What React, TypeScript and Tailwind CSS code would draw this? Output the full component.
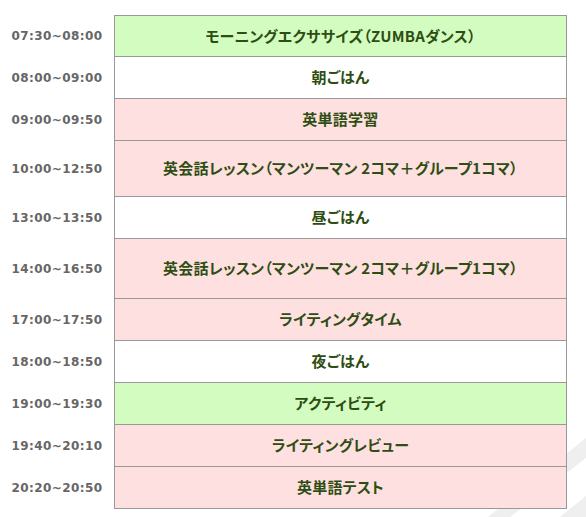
import React from "react";

type Row = {
  time: string;
  title: string;
  bg: "green" | "white" | "pink";
  h: string;
};

const rows: Row[] = [
  { time: "07:30~08:00", title: "モーニングエクササイズ（ZUMBAダンス）", bg: "green", h: "h-[42px]" },
  { time: "08:00~09:00", title: "朝ごはん", bg: "white", h: "h-[42px]" },
  { time: "09:00~09:50", title: "英単語学習", bg: "pink", h: "h-[42px]" },
  { time: "10:00~12:50", title: "英会話レッスン（マンツーマン 2コマ＋グループ1コマ）", bg: "pink", h: "h-[56px]" },
  { time: "13:00~13:50", title: "昼ごはん", bg: "white", h: "h-[42px]" },
  { time: "14:00~16:50", title: "英会話レッスン（マンツーマン 2コマ＋グループ1コマ）", bg: "pink", h: "h-[60px]" },
  { time: "17:00~17:50", title: "ライティングタイム", bg: "pink", h: "h-[42px]" },
  { time: "18:00~18:50", title: "夜ごはん", bg: "white", h: "h-[42px]" },
  { time: "19:00~19:30", title: "アクティビティ", bg: "green", h: "h-[42px]" },
  { time: "19:40~20:10", title: "ライティングレビュー", bg: "pink", h: "h-[42px]" },
  { time: "20:20~20:50", title: "英単語テスト", bg: "pink", h: "h-[42px]" },
];

const bgClass = {
  green: "bg-[#d3fdc0]",
  white: "bg-white",
  pink: "bg-[#ffe0e0]",
};

export default function App() {
  return (
    <div className="relative w-[586px] h-[517px] overflow-hidden bg-white">
      {/* faint diagonal stripes in the corner */}
      <svg className="absolute left-0 top-0" width="586" height="517" viewBox="0 0 586 517">
        <polygon points="586,438 586,458 500,525 478,525" fill="#efefef" />
        <polygon points="586,496 586,540 555,540 555,521" fill="#efefef" />
      </svg>

      <div className="relative pt-[15px] flex flex-col">
        {rows.map((r, i) => (
          <div key={i} className={`flex ${r.h} ${i === 0 ? "box-content" : ""}`}>
            <div className="w-[114px] flex items-center justify-center pb-px font-['DejaVu_Sans',sans-serif] font-bold text-[12px] tracking-[0.4px] text-[#666]">
              {r.time}
            </div>
            <div
              className={`w-[453px] flex items-center justify-center border-x border-b border-[#999] ${
                i === 0 ? "border-t" : ""
              } ${bgClass[r.bg]} font-['Noto_Sans_CJK_JP',sans-serif] font-bold text-[15px] tracking-[0.25px] text-[#2e4d12] [font-feature-settings:'palt']`}
            >
              {r.title}
            </div>
          </div>
        ))}
      </div>
    </div>
  );
}
